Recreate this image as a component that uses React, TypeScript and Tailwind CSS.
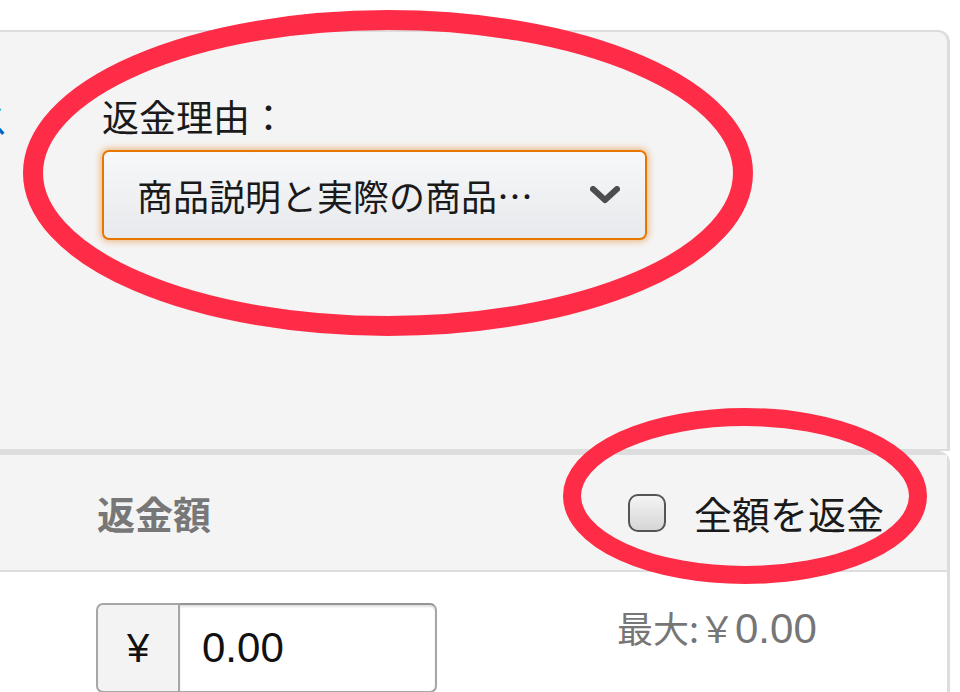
import React from "react";

export default function App() {
  return (
    <div className="relative w-[960px] h-[692px] overflow-hidden bg-white font-['Noto_Sans_CJK_JP',sans-serif] text-[#111111]">
      <div className="pt-[30px]">
        {/* Top panel */}
        <div className="flex h-[421px] w-[950px] rounded-tr-[12px] border-t-2 border-r-[3px] border-b-2 border-[#dddddd] bg-[#f4f4f4]">
          <div className="w-[102px] shrink-0 pt-[68px]">
            <span className="-ml-[28px] block text-[36px] leading-[36px] text-[#0066c0]">ス</span>
          </div>
          <div className="flex flex-col pt-[66px]">
            <div className="text-[37px] leading-[37px] text-[#1a1a1a]">返金理由：</div>
            <div className="mt-[15px] flex h-[90px] w-[545px] items-center rounded-[7px] border-2 border-[#e77600] bg-gradient-to-b from-[#f7f8fa] to-[#e7e9ec] pl-[33px] pr-[25px] shadow-[0_0_6px_2px_rgba(228,121,17,0.45)]">
              <span className="text-[36px] leading-[36px] text-[#1a1a1a]">商品説明と実際の商品…</span>
              <svg className="ml-auto" width="30" height="18" viewBox="0 0 30 18">
                <polyline points="3,3 15,14 27,3" fill="none" stroke="#4d4d4d" strokeWidth="6" strokeLinecap="round" strokeLinejoin="round" />
              </svg>
            </div>
          </div>
        </div>

        {/* Second panel */}
        <div className="w-[950px] rounded-tr-[12px] border-t-4 border-r-[3px] border-[#dddddd]">
          <div className="flex h-[117px] items-center border-b-2 border-[#dddddd] bg-[#f4f4f4] pl-[97px] pr-[63px]">
            <span className="text-[38px] font-bold leading-[38px] text-[#777777]">返金額</span>
            <div className="ml-auto flex items-center gap-[28px]">
              <div className="h-[38px] w-[38px] rounded-[10px] border-2 border-[#555555] bg-gradient-to-b from-[#f4f4f4] to-[#d6d6d6]" />
              <span className="text-[38px] leading-[38px] text-[#1a1a1a]">全額を返金</span>
            </div>
          </div>
          <div className="flex h-[200px] bg-white pl-[96px] pt-[31px]">
            <div className="flex h-[90px] w-[341px]">
              <div className="flex w-[84px] items-center justify-center rounded-l-[7px] border-2 border-[#a6a6a6] bg-[#f3f3f3]">
                <span className="font-['Liberation_Sans',sans-serif] text-[40px] leading-[40px]">¥</span>
              </div>
              <div className="flex flex-1 items-center rounded-r-[7px] border-2 border-l-0 border-[#a6a6a6] border-t-[#949494] bg-white pl-[22px] shadow-[inset_0_2px_2px_rgba(0,0,0,0.12)]">
                <span className="font-['Liberation_Sans',sans-serif] text-[42px] leading-[42px]">0.00</span>
              </div>
            </div>
            <div className="ml-[180px] mt-[6px] flex items-baseline text-[#767676]">
              <span className="text-[36px] leading-[36px]">最大:￥</span>
              <span className="font-['Liberation_Sans',sans-serif] text-[42px] leading-[36px]">0.00</span>
            </div>
          </div>
        </div>
      </div>

      {/* Red annotation ellipses */}
      <svg className="pointer-events-none absolute left-0 top-0" width="960" height="692" viewBox="0 0 960 692">
        <ellipse cx="388" cy="173" rx="355" ry="153" fill="none" stroke="#fe2c47" strokeWidth="20" />
        <ellipse cx="745" cy="496" rx="173" ry="79" fill="none" stroke="#fe2c47" strokeWidth="18" />
      </svg>
    </div>
  );
}
